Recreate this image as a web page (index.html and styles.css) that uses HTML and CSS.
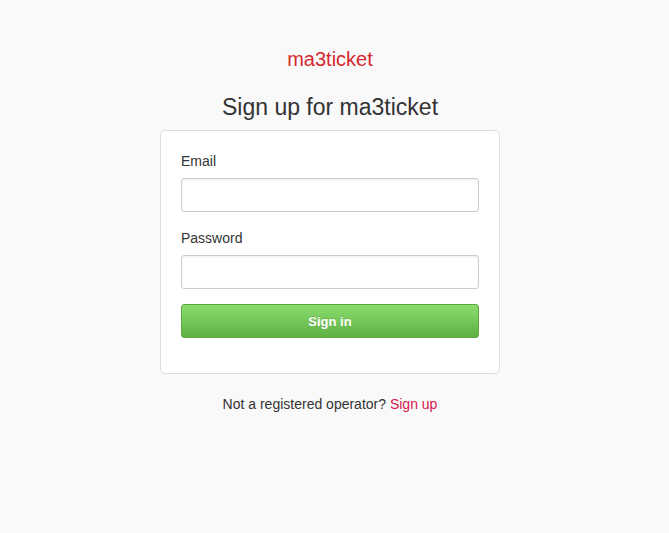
FILE: index.html
```html
<!DOCTYPE html>
<html>
<head>
<meta charset="utf-8">
<link rel="stylesheet" href="styles.css">
</head>
<body>
<div class="page">
  <div class="brand">ma3ticket</div>
  <h1 class="title">Sign up for ma3ticket</h1>
  <form class="card">
    <label class="label" for="email">Email</label>
    <input class="field" id="email" type="text">
    <label class="label label-pw" for="pw">Password</label>
    <input class="field" id="pw" type="password">
    <button class="btn" type="button">Sign in</button>
  </form>
  <p class="foot">Not a registered operator? <a class="link" href="#">Sign up</a></p>
</div>
</body>
</html>
```
FILE: styles.css
```css
html, body {
  margin: 0;
  padding: 0;
  background: #f9f9f9;
}
body {
  font-family: "Liberation Sans", Arial, sans-serif;
  color: #333;
}
.page {
  padding: 47px 9px 0 0;
  display: flex;
  flex-direction: column;
  align-items: center;
}
.brand {
  color: #d4282f;
  font-size: 20px;
  line-height: 24px;
}
.title {
  margin: 22px 0 0;
  font-size: 23px;
  font-weight: normal;
  line-height: 28px;
  color: #333;
}
.card {
  box-sizing: border-box;
  width: 340px;
  margin-top: 9px;
  background: #fff;
  border: 1px solid #d8dee2;
  border-radius: 5px;
  padding: 20px 20px 35px;
  display: flex;
  flex-direction: column;
}
.label {
  font-size: 14px;
  line-height: 20px;
  color: #333;
  margin-bottom: 7px;
}
.label-pw {
  margin-top: 16px;
}
.field {
  box-sizing: border-box;
  height: 34px;
  border: 1px solid #ccc;
  border-radius: 3px;
  box-shadow: inset 0 1px 2px rgba(0,0,0,0.075);
  background: #fff;
  font-size: 14px;
  padding: 6px 8px;
  margin: 0;
  outline: none;
}
.btn {
  margin-top: 15px;
  height: 34px;
  border: 1px solid #5ca941;
  border-radius: 3px;
  background: linear-gradient(#8add6d, #60b044);
  color: #fff;
  font-family: "Liberation Sans", Arial, sans-serif;
  font-size: 13px;
  font-weight: bold;
  text-shadow: 0 -1px 0 rgba(0,0,0,0.15);
  padding: 0;
}
.foot {
  margin: 20px 0 0;
  font-size: 14px;
  line-height: 20px;
  color: #333;
}
.link {
  color: #d6174f;
  text-decoration: none;
}
```
